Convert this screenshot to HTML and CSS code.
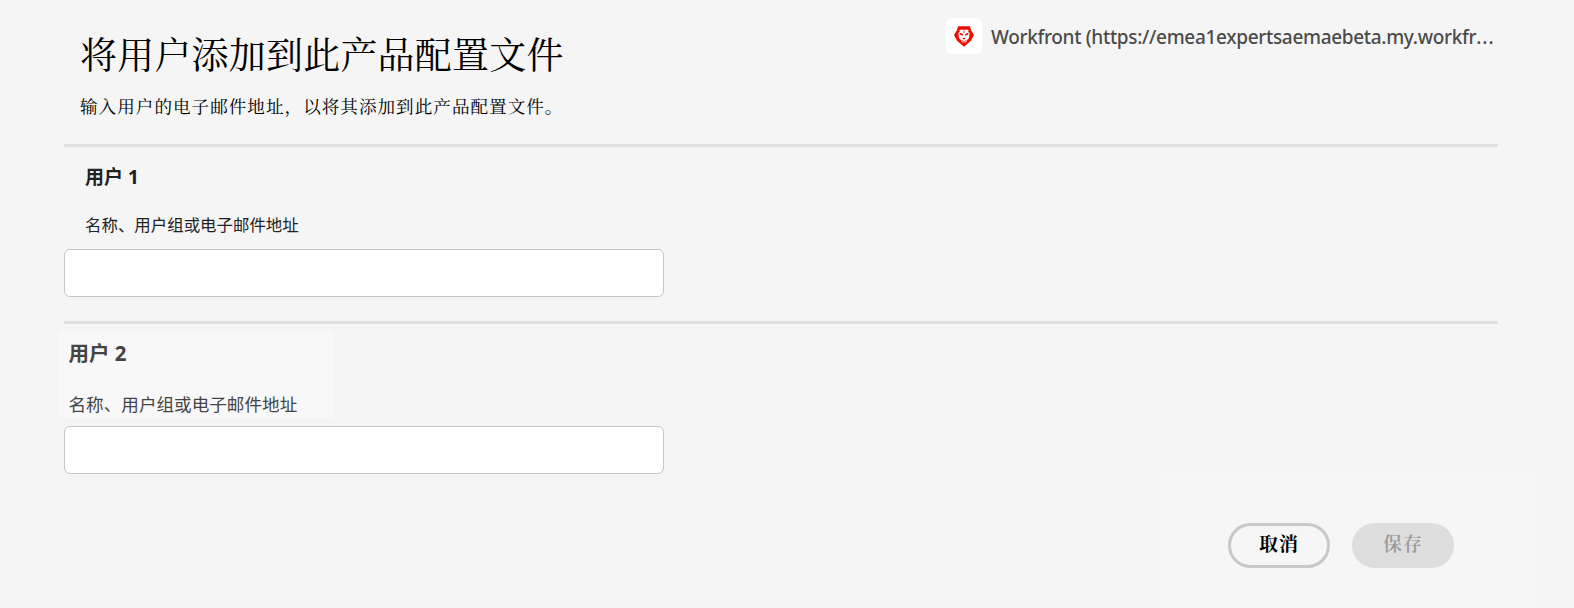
FILE: index.html
```html
<!DOCTYPE html>
<html lang="zh-CN">
<head>
<meta charset="utf-8">
<title>将用户添加到此产品配置文件</title>
<link rel="stylesheet" href="styles.css">
</head>
<body>
<main class="dialog">
  <header class="header">
    <div class="intro">
      <h1 class="title">将用户添加到此产品配置文件</h1>
      <p class="subtitle">输入用户的电子邮件地址，以将其添加到此产品配置文件。</p>
    </div>
    <div class="product">
      <span class="product-icon">
        <svg width="20" height="21" viewBox="0 0 20 21" aria-hidden="true">
          <path fill="#eb1000" d="M4.2 .3H15.8L17.2 4.6 20 9 17 14.8 10 20.8 3 14.8 0 9 2.8 4.6Z"/>
          <path fill="#fff" d="M5.2 4 8 3.4 10 4.1 12 3.4 14.8 4 14 5.2 15.7 7.2 14.9 12.3 12.7 14.2 12.4 16.2H7.6L7.3 14.2 5.1 12.3 4.3 7.2 6 5.2Z"/>
          <path fill="#eb1000" d="M5.3 6.6 9 8.1 8.7 9.8 6 8.7ZM14.7 6.6 11 8.1 11.3 9.8 14 8.7ZM8.2 12.1H11.8L10 13.7ZM7.7 14.2 10 14.9 12.3 14.2 11.7 15.4H8.3ZM9.6 4.6H10.4V7H9.6Z"/>
        </svg>
      </span>
      <span class="product-name">Workfront (https://emea1expertsaemaebeta.my.workfr<span class="dots">...</span></span>
    </div>
  </header>
  <section class="user user-first">
    <h2 class="user-title">用户 1</h2>
    <label class="user-label" for="user1">名称、用户组或电子邮件地址</label>
    <input class="field" id="user1" type="text">
  </section>
  <section class="user user-second">
    <div class="user-heading">
      <h2 class="user-title">用户 2</h2>
      <label class="user-label" for="user2">名称、用户组或电子邮件地址</label>
    </div>
    <input class="field" id="user2" type="text">
  </section>
  <footer class="actions">
    <button class="button cancel" type="button">取消</button>
    <button class="button save" type="button" disabled>保存</button>
  </footer>
</main>
</body>
</html>
```
FILE: styles.css
```css
* { box-sizing: border-box; }
body {
  margin: 0;
  background: #f5f5f5;
  font-family: "Noto Sans", "Noto Sans CJK SC", sans-serif;
}
h1, h2, p { margin: 0; font-weight: inherit; }
.dialog {
  height: 608px;
  padding: 0 76px 0 64px;
  overflow: hidden;
}
.header {
  display: flex;
  justify-content: space-between;
  height: 144px;
}
.intro {
  width: 545px;
  height: 135px;
  padding: 28px 0 0 16px;
  color: #000;
  font-family: "Noto Serif CJK SC", "Noto Sans CJK SC", serif;
  white-space: nowrap;
}
.title {
  font-size: 37px;
  font-weight: 400;
  letter-spacing: 0.2px;
  line-height: 50px;
}
.subtitle {
  margin-top: 15px;
  font-size: 17.6px;
  font-weight: 400;
  letter-spacing: 1px;
  line-height: 26px;
}
.product {
  display: flex;
  align-items: center;
  gap: 9px;
  height: 36px;
  margin: 18px 4px 0 0;
}
.product-icon {
  display: flex;
  align-items: center;
  justify-content: center;
  width: 36px;
  height: 36px;
  border-radius: 6px;
  background: #fff;
}
.product-name {
  width: 503px;
  padding-top: 1px;
  color: #4b4b4b;
  font-size: 19px;
  font-weight: 550;
  letter-spacing: -0.32px;
  white-space: nowrap;
}
.dots { letter-spacing: 1px; }
.user {
  display: flex;
  flex-direction: column;
  align-items: flex-start;
  height: 177px;
  border-top: 3px solid #e0e0e0;
}
.user-title { font-weight: 700; }
.user-label { white-space: nowrap; }
.user-first .user-title {
  margin: 16px 0 0 21px;
  color: #222;
  font-size: 19px;
  line-height: 28px;
}
.user-first .user-label {
  margin: 21px 0 0 21px;
  color: #222;
  font-size: 16.45px;
  line-height: 26px;
}
.user-first .field { margin-top: 11px; }
.user-heading {
  display: flex;
  flex-direction: column;
  width: 275px;
  height: 87px;
  margin: 7px 0 0 -5px;
  padding: 8px 0 0 9.5px;
  background: #f8f8f8;
  color: #444;
}
.user-second .user-title {
  font-size: 20.5px;
  line-height: 28px;
}
.user-second .user-label {
  margin-top: 23px;
  font-size: 17.6px;
  line-height: 28px;
}
.user-second .field { margin-top: 8px; }
.field {
  width: 600px;
  height: 48px;
  border: 1px solid #c6c6c6;
  border-radius: 6px;
  background: #fff;
}
.actions {
  display: flex;
  gap: 22px;
  justify-content: flex-end;
  width: 380px;
  height: 136px;
  margin: -26px -40px 0 auto;
  padding: 51px 84px 0 0;
  background: #f6f6f6;
}
.button {
  width: 102px;
  height: 45px;
  padding: 0 0 6px;
  border: 0;
  border-radius: 23px;
  font-family: "Noto Serif CJK SC", "Noto Sans CJK SC", serif;
  font-size: 19px;
  letter-spacing: 1px;
}
.cancel {
  border: 3px solid #c8c8c8;
  background: #f6f6f6;
  color: #000;
  font-weight: 700;
}
.save {
  background: #dedede;
  color: #999;
  font-weight: 600;
}
```
